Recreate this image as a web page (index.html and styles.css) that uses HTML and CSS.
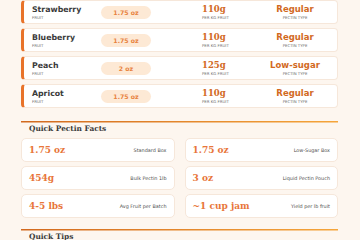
FILE: index.html
```html
<!DOCTYPE html>
<html>
<head>
<meta charset="utf-8">
<link rel="stylesheet" href="styles.css">
</head>
<body>
<div class="wrap">
  <div class="rows">
    <div class="row">
      <div class="c-name"><div class="name">Strawberry</div><div class="tiny">FRUIT</div></div>
      <div class="c-pill"><span class="pill">1.75 oz</span></div>
      <div class="c-val"><div class="val">110g</div><div class="tiny">PER KG FRUIT</div></div>
      <div class="c-type"><div class="type">Regular</div><div class="tiny">PECTIN TYPE</div></div>
    </div>
    <div class="row">
      <div class="c-name"><div class="name">Blueberry</div><div class="tiny">FRUIT</div></div>
      <div class="c-pill"><span class="pill">1.75 oz</span></div>
      <div class="c-val"><div class="val">110g</div><div class="tiny">PER KG FRUIT</div></div>
      <div class="c-type"><div class="type">Regular</div><div class="tiny">PECTIN TYPE</div></div>
    </div>
    <div class="row">
      <div class="c-name"><div class="name">Peach</div><div class="tiny">FRUIT</div></div>
      <div class="c-pill"><span class="pill">2 oz</span></div>
      <div class="c-val"><div class="val">125g</div><div class="tiny">PER KG FRUIT</div></div>
      <div class="c-type"><div class="type">Low-sugar</div><div class="tiny">PECTIN TYPE</div></div>
    </div>
    <div class="row">
      <div class="c-name"><div class="name">Apricot</div><div class="tiny">FRUIT</div></div>
      <div class="c-pill"><span class="pill">1.75 oz</span></div>
      <div class="c-val"><div class="val">110g</div><div class="tiny">PER KG FRUIT</div></div>
      <div class="c-type"><div class="type">Regular</div><div class="tiny">PECTIN TYPE</div></div>
    </div>
  </div>

  <section class="section facts-section">
    <h2 class="section-title">Quick Pectin Facts</h2>
    <div class="facts">
      <div class="fact"><span class="fact-val">1.75 oz</span><span class="fact-label">Standard Box</span></div>
      <div class="fact"><span class="fact-val">1.75 oz</span><span class="fact-label">Low-Sugar Box</span></div>
      <div class="fact"><span class="fact-val">454g</span><span class="fact-label">Bulk Pectin 1lb</span></div>
      <div class="fact"><span class="fact-val">3 oz</span><span class="fact-label">Liquid Pectin Pouch</span></div>
      <div class="fact"><span class="fact-val">4-5 lbs</span><span class="fact-label">Avg Fruit per Batch</span></div>
      <div class="fact"><span class="fact-val">~1 cup jam</span><span class="fact-label">Yield per lb fruit</span></div>
    </div>
  </section>

  <section class="section tips-section">
    <h2 class="section-title">Quick Tips</h2>
  </section>
</div>
</body>
</html>
```

FILE: styles.css
```css
html, body {
  margin: 0;
  padding: 0;
}
body {
  background: #fdf6ef;
  font-family: "DejaVu Sans", sans-serif;
  color: #333;
}
.wrap {
  padding: 0 22px 0 21px;
}
.rows {
  display: flex;
  flex-direction: column;
  gap: 4px;
}
.row {
  box-sizing: border-box;
  height: 24px;
  background: #fff;
  border: 1px solid #f6e7da;
  border-left: 3px solid #e8732a;
  border-radius: 4px;
  display: flex;
  align-items: center;
}
.c-name {
  padding-left: 8px;
  box-sizing: border-box;
  width: 77px;
}
.name {
  font-size: 7.8px;
  font-weight: bold;
  line-height: 9px;
  color: #3a3a3a;
}
.tiny {
  font-size: 3.9px;
  line-height: 5px;
  color: #6f6f6f;
  text-transform: uppercase;
  margin-top: 1px;
}
.c-pill {
  width: 50px;
}
.pill {
  display: flex;
  align-items: center;
  justify-content: center;
  height: 13px;
  border-radius: 7px;
  background: #fde9d5;
  color: #e8823e;
  font-size: 6.2px;
  font-weight: bold;
}
.c-val {
  margin-left: 51px;
  width: 68px;
}
.val {
  font-family: "DejaVu Serif", serif;
  font-weight: bold;
  font-size: 8.5px;
  line-height: 9px;
  color: #d2691e;
}
.c-type {
  width: 50px;
  text-align: center;
}
.type {
  font-weight: bold;
  font-size: 8.5px;
  line-height: 9px;
  color: #d2691e;
}
.section {
  margin-top: 13px;
}
.tips-section {
  margin-top: 11px;
}
.section-title {
  margin: 0;
  padding: 3px 8px 0;
  font-family: "DejaVu Serif", serif;
  font-weight: bold;
  font-size: 7.4px;
  line-height: 9px;
  color: #3a3a3a;
  background: linear-gradient(90deg, #d2691e, #f5a53a) top left / 100% 1.5px no-repeat;
}
.facts {
  margin-top: 5px;
  display: grid;
  grid-template-columns: 1fr 1fr;
  column-gap: 10px;
  row-gap: 4px;
}
.fact {
  box-sizing: border-box;
  height: 24px;
  background: #fff;
  border: 1px solid #f6e7da;
  border-radius: 5px;
  padding: 0 7px;
  display: flex;
  align-items: center;
  justify-content: space-between;
}
.fact-val {
  font-family: "DejaVu Serif", serif;
  font-weight: bold;
  font-size: 9px;
  color: #e8763a;
}
.fact-label {
  font-size: 4.9px;
  color: #505050;
}
```
